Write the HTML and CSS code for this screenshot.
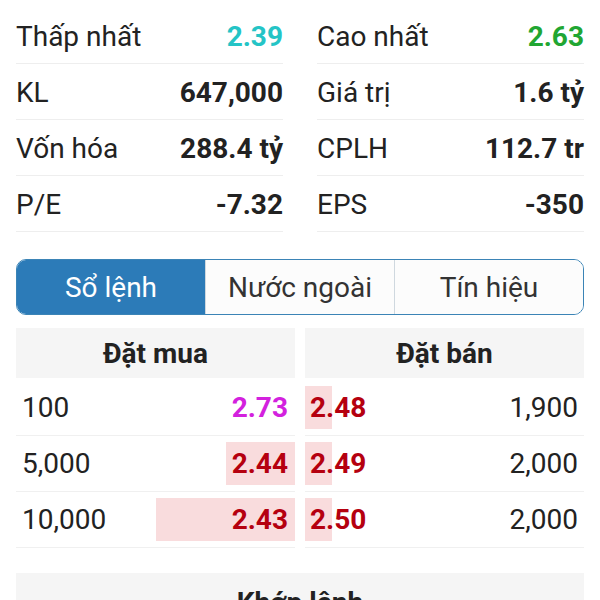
FILE: index.html
```html
<!DOCTYPE html>
<html lang="vi">

<head>
    <meta charset="UTF-8">
    <meta name="viewport" content="width=device-width, initial-scale=1.0">
    <title>Chi tiết cổ phiếu</title>
    <link rel="stylesheet" href="styles.css">
</head>

<body>
    <div class="stats">
        <div class="stats-col">
            <div class="stat-row"><span>Thấp nhất</span><b class="low">2.39</b></div>
            <div class="stat-row"><span>KL</span><b>647,000</b></div>
            <div class="stat-row"><span>Vốn hóa</span><b>288.4 tỷ</b></div>
            <div class="stat-row"><span>P/E</span><b>-7.32</b></div>
        </div>
        <div class="stats-col">
            <div class="stat-row"><span>Cao nhất</span><b class="high">2.63</b></div>
            <div class="stat-row"><span>Giá trị</span><b>1.6 tỷ</b></div>
            <div class="stat-row"><span>CPLH</span><b>112.7 tr</b></div>
            <div class="stat-row"><span>EPS</span><b>-350</b></div>
        </div>
    </div>

    <div class="tabs">
        <div class="tab active">Sổ lệnh</div>
        <div class="tab">Nước ngoài</div>
        <div class="tab">Tín hiệu</div>
    </div>

    <div class="book">
        <div class="book-side buy">
            <div class="book-head">Đặt mua</div>
            <div class="book-row">
                <span class="qty">100</span>
                <span class="price ceil"><i class="bar" style="width: 0px"></i>2.73</span>
            </div>
            <div class="book-row">
                <span class="qty">5,000</span>
                <span class="price down"><i class="bar" style="width: 69px"></i>2.44</span>
            </div>
            <div class="book-row">
                <span class="qty">10,000</span>
                <span class="price down"><i class="bar" style="width: 139px"></i>2.43</span>
            </div>
        </div>
        <div class="book-side sell">
            <div class="book-head">Đặt bán</div>
            <div class="book-row">
                <span class="price down"><i class="bar" style="width: 27px"></i>2.48</span>
                <span class="qty">1,900</span>
            </div>
            <div class="book-row">
                <span class="price down"><i class="bar" style="width: 27px"></i>2.49</span>
                <span class="qty">2,000</span>
            </div>
            <div class="book-row">
                <span class="price down"><i class="bar" style="width: 27px"></i>2.50</span>
                <span class="qty">2,000</span>
            </div>
        </div>
    </div>

    <div class="matched">
        <div class="matched-head">Khớp lệnh</div>
    </div>
</body>

</html>
```

FILE: styles.css
```css
body {
    font-family: Roboto, "Noto Sans", sans-serif;
    font-size: 28px;
    margin: 0;
    padding: 8px 16px 0 16px;
    background-color: #ffffff;
    color: #222222;
    overflow: hidden;
}

.stats {
    display: grid;
    grid-template-columns: 1fr 1fr;
    column-gap: 34px;
}

.stat-row {
    display: flex;
    justify-content: space-between;
    align-items: center;
    height: 56px;
    padding-top: 2px;
    box-sizing: border-box;
    border-bottom: 1px solid #eeeeee;
}

.stat-row b {
    font-weight: 700;
}

.stat-row .low {
    color: #24c4c6;
}

.stat-row .high {
    color: #21a632;
}

.tabs {
    display: flex;
    margin-top: 27px;
    height: 56px;
    border: 1px solid #3b84b6;
    border-radius: 10px;
    overflow: hidden;
    box-sizing: border-box;
}

.tab {
    flex: 1;
    display: flex;
    justify-content: center;
    align-items: center;
    color: #333333;
    background: #fcfcfc;
    border-left: 1px solid #cfd8df;
}

.tab:first-child {
    border-left: none;
}

.tab.active {
    background: #2c7bb8;
    color: #ffffff;
}

.book {
    display: grid;
    grid-template-columns: 1fr 1fr;
    column-gap: 10px;
    margin-top: 13px;
}

.book-head {
    height: 50px;
    display: flex;
    justify-content: center;
    align-items: center;
    background: #f5f5f5;
    font-weight: 700;
    margin-bottom: 2px;
}

.book-row {
    display: flex;
    justify-content: space-between;
    align-items: center;
    height: 56px;
    border-bottom: 1px solid #f0f0f0;
    box-sizing: border-box;
}

.qty {
    padding: 0 6px;
}

.price {
    position: relative;
    height: 100%;
    display: flex;
    align-items: center;
    font-weight: 700;
    z-index: 0;
}

.buy .price {
    padding-right: 7px;
}

.sell .price {
    padding-left: 5px;
}

.price .bar {
    position: absolute;
    top: 6px;
    bottom: 6px;
    background: #f9dcdd;
    z-index: -1;
}

.buy .bar {
    right: 0;
}

.sell .bar {
    left: 0;
}

.price.ceil {
    color: #d321de;
}

.price.down {
    color: #b5000f;
}

.matched {
    margin-top: 25px;
}

.matched-head {
    height: 50px;
    background: #f5f5f5;
    font-weight: 700;
    text-align: center;
    padding-top: 13px;
    box-sizing: border-box;
}
```
